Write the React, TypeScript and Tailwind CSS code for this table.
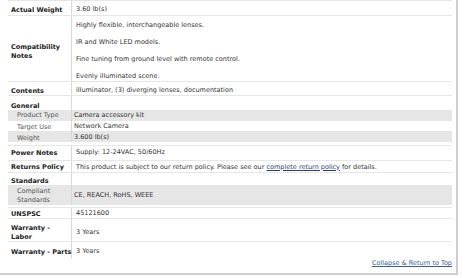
import React from 'react'

type Sub = { label: string; value: string; gray?: boolean; h: string; pt: string }

const font = { fontFamily: '"DejaVu Sans", Verdana, sans-serif' }

function Row({ label, children, h, pt, border = true }: { label: React.ReactNode; children: React.ReactNode; h: string; pt: string; border?: boolean }) {
  return (
    <div className={`flex ${h} ${border ? 'border-b border-[#e6e6e6]' : ''}`}>
      <div className={`w-[64px] shrink-0 border-r border-[#d8d8d8] flex items-center pl-[3px] ${pt} font-bold text-[#222] leading-[9px]`}>
        {label}
      </div>
      <div className={`flex-1 flex items-center pl-[4px] ${pt} text-[#333]`}>{children}</div>
    </div>
  )
}

function Group({ title, rows, hTitle, ptTitle, pb }: { title: string; rows: Sub[]; hTitle: string; ptTitle: string; pb: string }) {
  return (
    <div className={`border-b border-[#e6e6e6] ${pb}`}>
      <div className={`flex ${hTitle}`}>
        <div className={`w-[64px] shrink-0 border-r border-[#d8d8d8] flex items-center pl-[3px] ${ptTitle} font-bold text-[#222] leading-[9px]`}>{title}</div>
        <div className="flex-1" />
      </div>
      {rows.map(r => (
        <div key={r.label} className={`flex ${r.h} ${r.gray ? 'bg-[#e6e6e6]' : ''}`}>
          <div className={`w-[64px] shrink-0 border-r border-[#d8d8d8] flex items-center pl-[9px] ${r.pt} text-[#555] leading-[9px]`}>{r.label}</div>
          <div className={`flex-1 flex items-center pl-[2px] ${r.pt} text-[#333]`}>{r.value}</div>
        </div>
      ))}
    </div>
  )
}

export default function App() {
  return (
    <div className="w-[465px] h-[278px] bg-white overflow-hidden text-[6.5px]" style={font}>
      <div className="w-[458px] h-[275px] border-r-2 border-b-2 border-[#cfcfcf] pl-[8px] pr-[4px] flex flex-col">
        <div className="border-t border-[#e6e6e6]">
          <Row label="Actual Weight" h="h-[15px]" pt="pt-[4px]">3.60 lb(s)</Row>
          <div className="flex h-[66px] border-b border-[#e6e6e6]">
            <div className="w-[64px] shrink-0 border-r border-[#d8d8d8] flex items-center pl-[3px] pt-[6px] font-bold text-[#222] leading-[9px]">
              <span>Compatibility<br />Notes</span>
            </div>
            <div className="flex-1 flex flex-col gap-[8px] pl-[4px] pt-[5px] leading-[9px] text-[#333]">
              <p>Highly flexible, interchangeable lenses.</p>
              <p>IR and White LED models.</p>
              <p>Fine tuning from ground level with remote control.</p>
              <p>Evenly illuminated scene.</p>
            </div>
          </div>
          <Row label="Contents" h="h-[14px]" pt="pt-[5px]">illuminator, (3) diverging lenses, documentation</Row>
          <Group
            title="General"
            hTitle="h-[14px]"
            ptTitle="pt-[6px]"
            pb="pb-[3px]"
            rows={[
              { label: 'Product Type', value: 'Camera accessory kit', gray: true, h: 'h-[11px]', pt: 'pt-0' },
              { label: 'Target Use', value: 'Network Camera', h: 'h-[10px]', pt: 'pt-[2px]' },
              { label: 'Weight', value: '3.600 lb(s)', gray: true, h: 'h-[11px]', pt: 'pt-[3px]' },
            ]}
          />
          <Row label="Power Notes" h="h-[15px]" pt="pt-0">Supply: 12-24VAC, 50/60Hz</Row>
          <Row label="Returns Policy" h="h-[12px]" pt="pt-[2px]">
            <span>
              This product is subject to our return policy. Please see our{' '}
              <span className="underline text-[#2a3f7a]">complete return policy</span> for details.
            </span>
          </Row>
          <Group
            title="Standards"
            hTitle="h-[12px]"
            ptTitle="pt-[4px]"
            pb="pb-[2px]"
            rows={[{ label: 'Compliant Standards', value: 'CE, REACH, RoHS, WEEE', gray: true, h: 'h-[20px]', pt: 'pt-[2px]' }]}
          />
          <Row label="UNSPSC" h="h-[11px]" pt="pt-[2px]">45121600</Row>
          <Row label={<span>Warranty -<br />Labor</span>} h="h-[23px]" pt="pt-[5px]">3 Years</Row>
          <Row label={<span className="whitespace-nowrap">Warranty - Parts</span>} h="h-[17px]" pt="pt-[3px]" border={false}>3 Years</Row>
        </div>
        <div className="flex justify-end">
          <span className="underline text-[#3b5b93]">Collapse &amp; Return to Top</span>
        </div>
      </div>
    </div>
  )
}
